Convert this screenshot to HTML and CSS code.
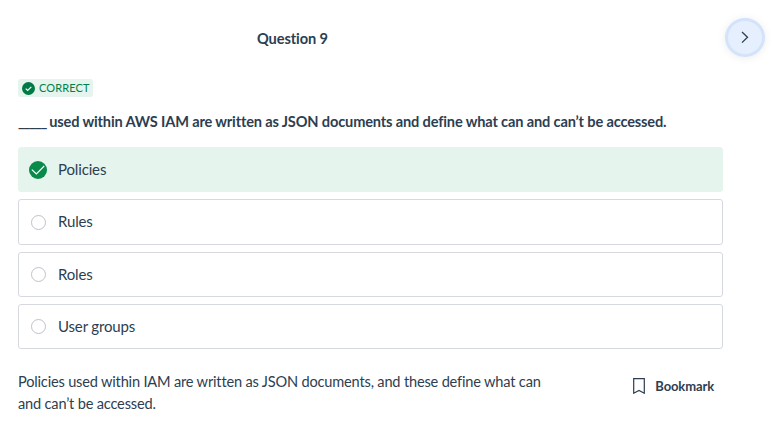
FILE: index.html
```html
<!DOCTYPE html>
<html lang="en">
<head>
<meta charset="utf-8">
<title>Question 9</title>
<link rel="stylesheet" href="styles.css">
</head>
<body>
<header class="header">
  <h1 class="title">Question 9</h1>
  <button class="next" aria-label="Next"><svg width="20" height="20" viewBox="0 0 20 20"><path d="M7 4 12.5 9.3 7 14.6"/></svg></button>
</header>
<main class="main">
  <div class="badge"><svg width="13" height="13" viewBox="0 0 13 13"><circle cx="6.5" cy="6.5" r="6.5"/><path d="M3.7 6.6 5.7 8.5 9.3 4.8"/></svg><span>CORRECT</span></div>
  <h2 class="question"><span class="blank">_____</span> used within AWS IAM are written as JSON documents and define what can and can’t be accessed.</h2>
  <ul class="options">
    <li class="option correct"><svg class="mark" width="18" height="18" viewBox="0 0 18 18"><circle cx="9" cy="9" r="9"/><path d="M2.8 8.6 7.4 13 15.2 5"/></svg><span class="label">Policies</span></li>
    <li class="option"><span class="radio"></span><span class="label">Rules</span></li>
    <li class="option"><span class="radio"></span><span class="label">Roles</span></li>
    <li class="option"><span class="radio"></span><span class="label">User groups</span></li>
  </ul>
  <div class="footer">
    <p class="explain">Policies used within IAM are written as JSON documents, and these define what can and can’t be accessed.</p>
    <button class="bookmark"><svg width="12" height="16" viewBox="0 0 12 16"><path d="M.7.7H11.3V15.2L6 12.5.7 15.2Z"/></svg>Bookmark</button>
  </div>
</main>
</body>
</html>
```
FILE: styles.css
```css
* { box-sizing: border-box; }
body { margin: 0; background: #fff; color: #2d3e50; font-family: Lato, sans-serif; font-size: 15px; }
h1, h2, p, ul { margin: 0; padding: 0; }
button { border: 0; background: none; padding: 0; color: inherit; font: inherit; }
.header { height: 79px; padding: 18px 15px 0 257px; display: flex; justify-content: space-between; align-items: flex-start; }
.title { font-size: 14.6px; line-height: 20px; margin-top: 11px; font-weight: 700; letter-spacing: -.1px; }
.next { width: 40px; height: 39px; border-radius: 50%; border: 3px solid #d3e3fc; background: #e6effe; box-shadow: 0 1px 8px rgba(0, 0, 0, .08); display: flex; align-items: center; justify-content: center; }
.next path { fill: none; stroke: #2d3e50; stroke-width: 1.3; }
.main { width: 705px; margin-left: 18px; }
.badge { display: flex; align-items: center; width: 75px; height: 18px; padding-left: 4px; gap: 4px; background: #e5f4ed; border-radius: 3px; color: #00804a; font-size: 11px; }
.badge span { margin-top: -2px; letter-spacing: .1px; }
.badge circle { fill: #007a45; }
.mark circle { fill: #088a4b; }
.badge path, .mark path { fill: none; stroke: #fff; stroke-width: 1.2; }
.question { font-size: 14.6px; line-height: 22px; margin-top: 14px; white-space: nowrap; letter-spacing: -.155px; }
.blank { letter-spacing: -1.2px; margin-right: -.2px; }
.options { list-style: none; margin-top: 14px; display: grid; grid-template-rows: 45px 46px 45px 45px; row-gap: 7px; }
.option { display: flex; align-items: center; border: 1px solid #d6d9df; border-radius: 3px; padding-left: 12px; }
.correct { border-color: #e5f4ed; background: #e5f4ed; padding-left: 10px; }
.label { margin-top: -2px; letter-spacing: -.15px; }
.mark { margin-right: 11px; }
.radio { width: 15px; height: 15px; border: 1px solid #bdc3cb; border-radius: 50%; margin-right: 12px; }
.footer { display: flex; justify-content: space-between; align-items: flex-start; padding-right: 9px; margin-top: 22px; }
.explain { width: 530px; font-size: 14.6px; line-height: 22px; letter-spacing: -.185px; }
.bookmark { display: flex; align-items: center; height: 30px; gap: 10px; font-size: 13px; font-weight: 700; letter-spacing: -.12px; }
.bookmark path { fill: none; stroke: #2d3e50; stroke-width: 1.2; }
```
